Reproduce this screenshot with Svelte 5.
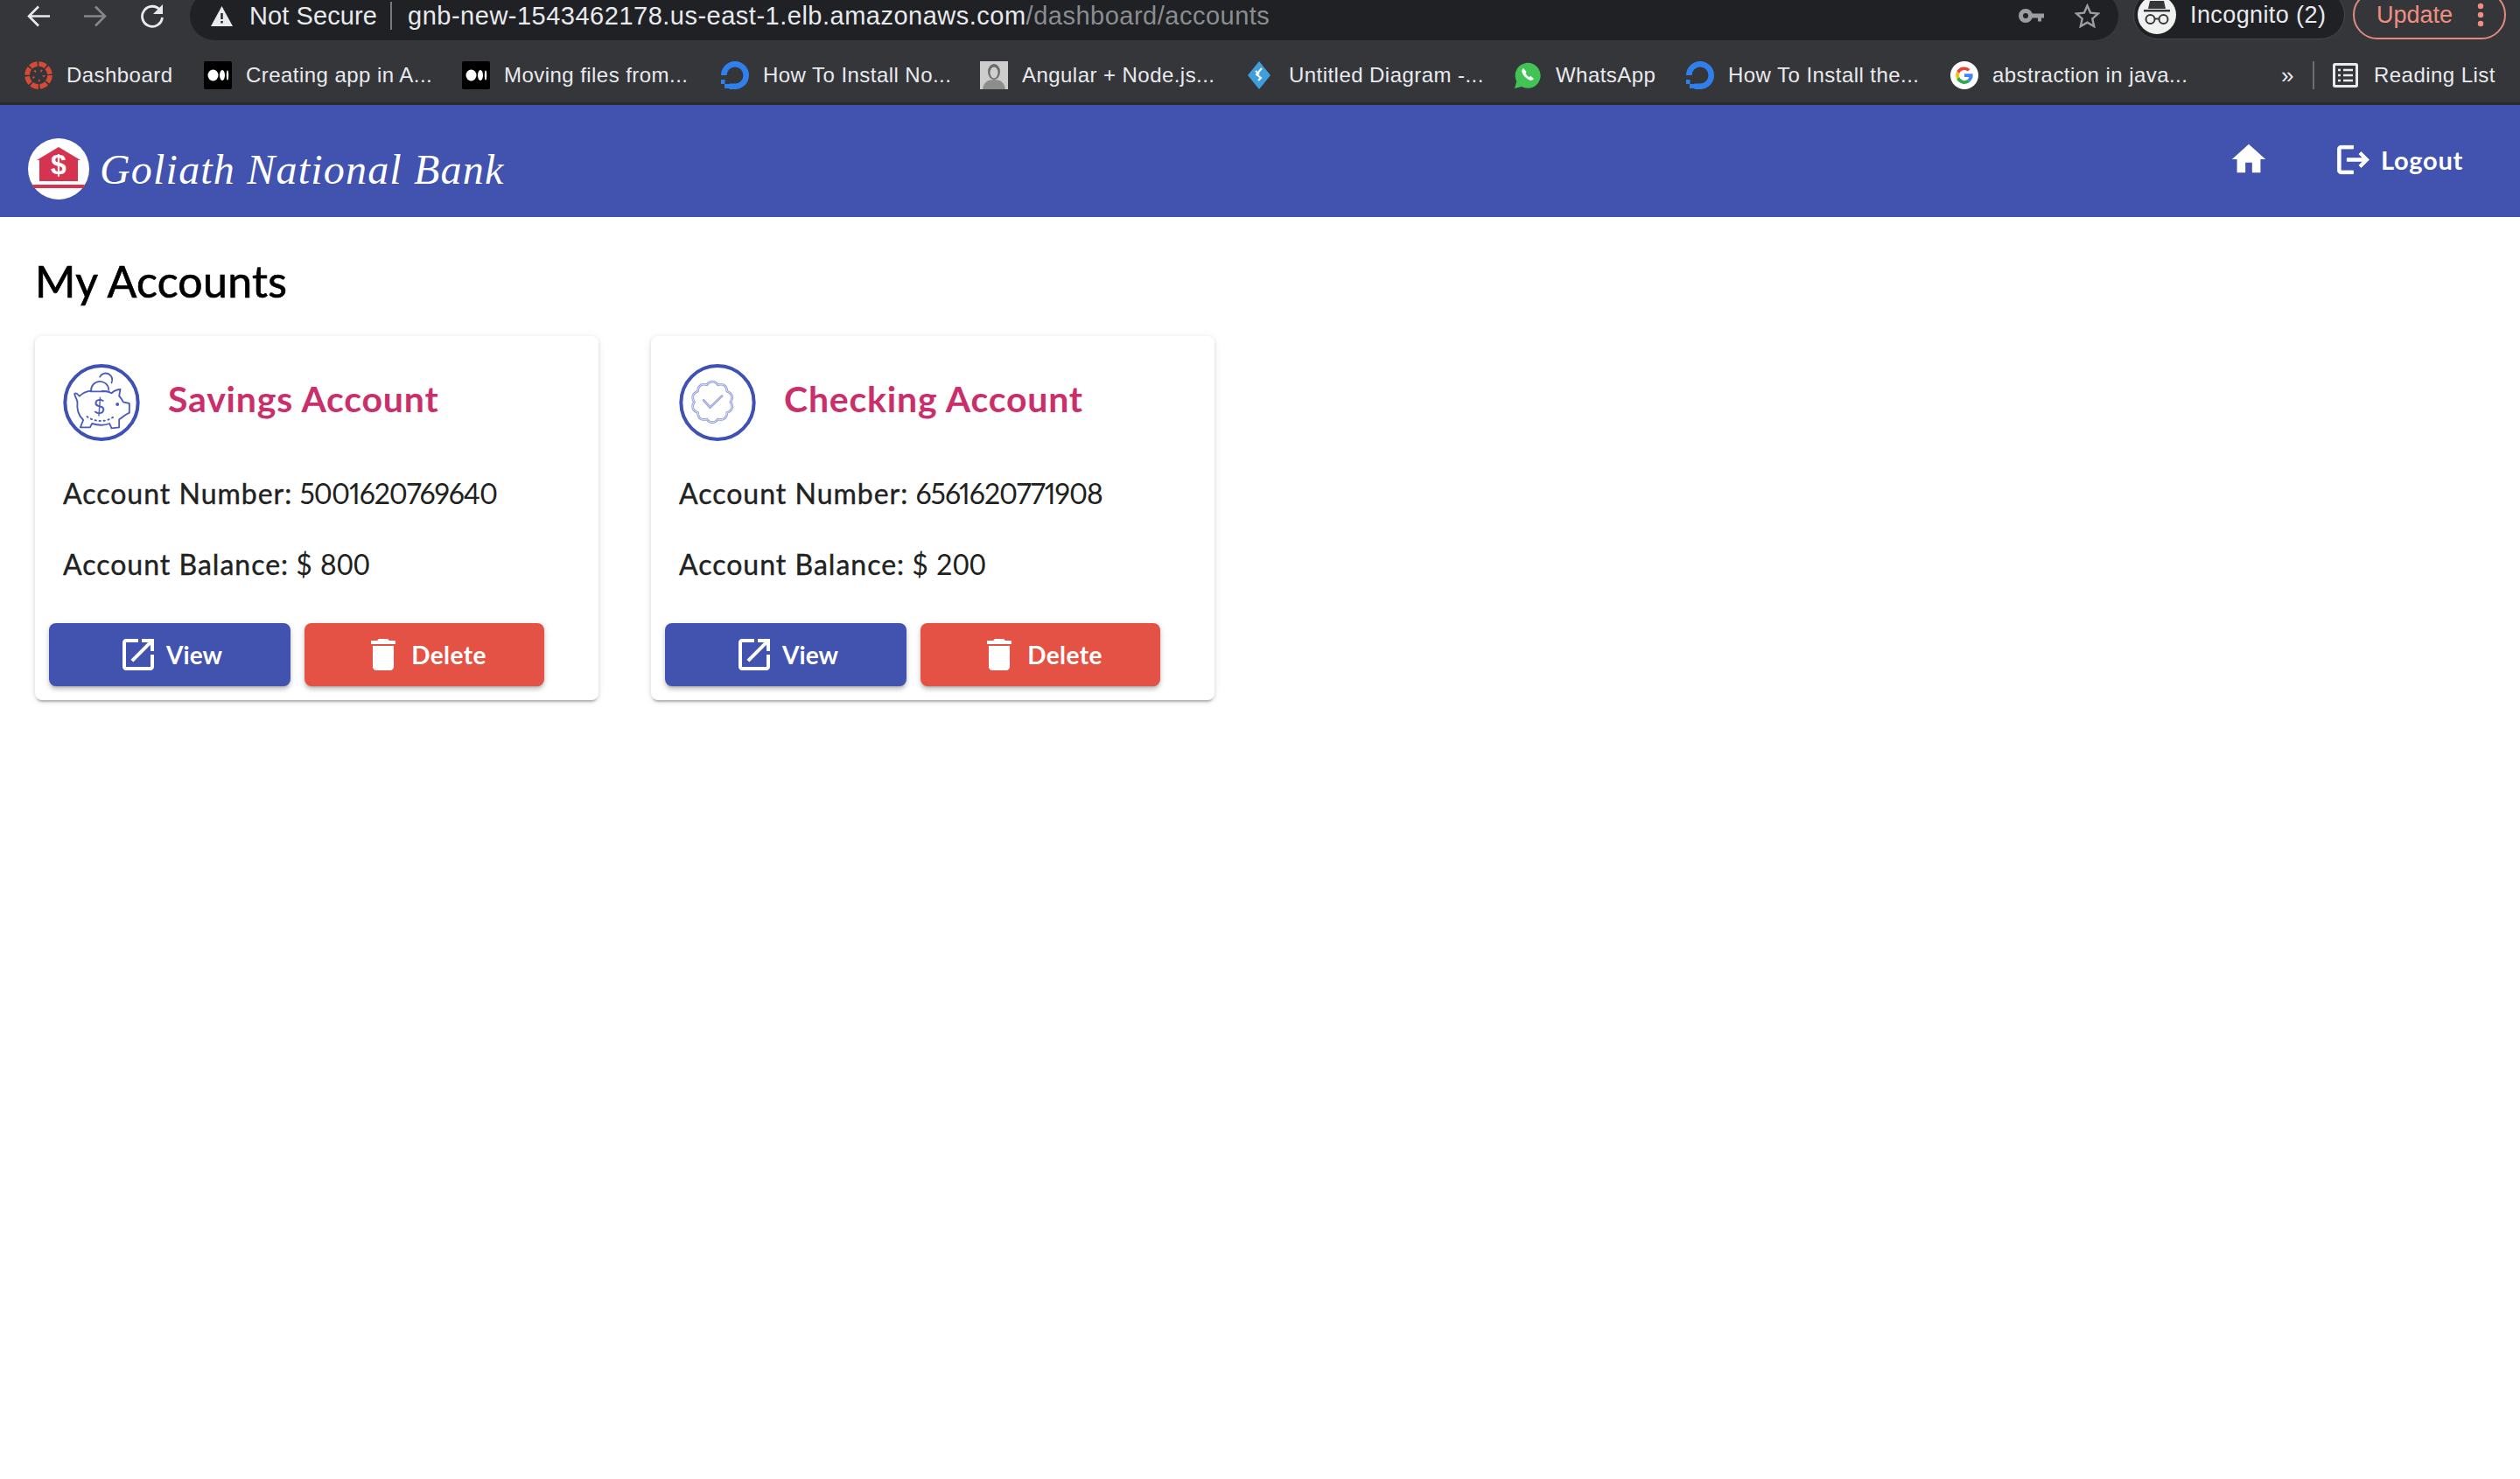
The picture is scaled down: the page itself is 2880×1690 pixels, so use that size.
<script>
  const bookmarks = [
    { icon: 'canvas', label: 'Dashboard', width: 205 },
    { icon: 'medium', label: 'Creating app in A...', width: 295 },
    { icon: 'medium', label: 'Moving files from...', width: 296 },
    { icon: 'do', label: 'How To Install No...', width: 296 },
    { icon: 'photo', label: 'Angular + Node.js...', width: 305 },
    { icon: 'diagram', label: 'Untitled Diagram -...', width: 305 },
    { icon: 'whatsapp', label: 'WhatsApp', width: 197 },
    { icon: 'do', label: 'How To Install the...', width: 302 },
    { icon: 'google', label: 'abstraction in java...', width: 378 }
  ];
  const accounts = [
    { type: 'savings', title: 'Savings Account', number: '5001620769640', balance: '800' },
    { type: 'checking', title: 'Checking Account', number: '6561620771908', balance: '200' }
  ];
  function scallop(cx, cy, r, amp, n) {
    let d = '';
    for (let i = 0; i <= 180; i++) {
      const a = (i / 180) * Math.PI * 2;
      const rr = r + amp * Math.abs(Math.sin((a * n) / 2));
      d += (i ? 'L' : 'M') + (cx + rr * Math.cos(a)).toFixed(1) + ' ' + (cy + rr * Math.sin(a)).toFixed(1);
    }
    return d + 'Z';
  }
  const badge = scallop(180, 178, 62, 8, 10);
</script>

<div class="page">
  <div class="toolbar">
    <div class="tb-btn back">
      <svg width="27" height="25" viewBox="0 0 27 25"><path d="M26 12.5H3M13 1.5 2 12.5l11 11" fill="none" stroke="#e8eaed" stroke-width="2.6"/></svg>
    </div>
    <div class="tb-btn forward">
      <svg width="27" height="25" viewBox="0 0 27 25"><path d="M1 12.5h23M14 1.5l11 11-11 11" fill="none" stroke="#85878b" stroke-width="2.6"/></svg>
    </div>
    <div class="tb-btn reload">
      <svg width="30" height="30" viewBox="0 0 30 30"><path d="M24 8.5A11.5 11.5 0 1 0 26.5 17" fill="none" stroke="#e8eaed" stroke-width="2.8"/><path d="M27 2v11H16z" fill="#e8eaed"/></svg>
    </div>
    <div class="omnibox">
      <svg class="warn" width="25" height="23" viewBox="0 0 25 23"><path d="M12.5 0 25 23H0z" fill="#e8eaed"/><path d="M11.3 8h2.4v7h-2.4zM11.3 17h2.4v2.6h-2.4z" fill="#202124"/></svg>
      <span class="secure">Not Secure</span>
      <span class="omni-sep"></span>
      <span class="url">gnb-new-1543462178.us-east-1.elb.amazonaws.com<span class="path">/dashboard/accounts</span></span>
      <svg class="key" width="29" height="16" viewBox="0 0 29 16"><circle cx="8" cy="8" r="5.5" fill="none" stroke="#9b9da1" stroke-width="5"/><path d="M13 5.5h16v5h-3v4h-4v-4h-9z" fill="#9b9da1"/></svg>
      <svg class="star" width="29" height="28" viewBox="0 0 29 28"><path d="m14.5 2.5 3.6 8.1 8.9.9-6.7 5.9 1.9 8.7-7.7-4.5-7.7 4.5 1.9-8.7L2 11.500l8.900-.9z" fill="none" stroke="#9b9da1" stroke-width="2.4"/></svg>
    </div>
    <div class="incognito">
      <span class="inc-circle">
        <svg width="44" height="44" viewBox="0 0 44 44"><path d="M14 6h16l2 9H12zM7 16h30v2.500H7z" fill="#35363a"/><circle cx="14.500" cy="27" r="5" fill="none" stroke="#35363a" stroke-width="2"/><circle cx="29.500" cy="27" r="5" fill="none" stroke="#35363a" stroke-width="2"/><path d="M19.500 26.500h5" stroke="#35363a" stroke-width="2"/></svg>
      </span>
      <span>Incognito (2)</span>
    </div>
    <div class="update">
      <span>Update</span>
      <svg width="8" height="28" viewBox="0 0 8 28"><circle cx="4" cy="4" r="3.200" fill="#ee8f82"/><circle cx="4" cy="14" r="3.200" fill="#ee8f82"/><circle cx="4" cy="24" r="3.200" fill="#ee8f82"/></svg>
    </div>
  </div>

  <div class="bookmarks">
    {#each bookmarks as b}
      <div class="bm" style="width:{b.width}px">
        <svg class="fav" width="32" height="32" viewBox="0 0 32 32">
          {#if b.icon === 'canvas'}
            <circle cx="16" cy="16" r="13" fill="none" stroke="#d64a37" stroke-width="5.500" stroke-dasharray="8.500 1.700"/>
            <circle cx="16" cy="16" r="6" fill="none" stroke="#d64a37" stroke-width="2.500" stroke-dasharray="1.800 5.700"/>
          {:else if b.icon === 'medium'}
            <rect width="32" height="32" rx="2" fill="#000"/>
            <ellipse cx="10.500" cy="16" rx="6" ry="6.500" fill="#fff"/>
            <ellipse cx="21" cy="16" rx="3" ry="6" fill="#fff"/>
            <ellipse cx="27" cy="16" rx="1.200" ry="5.500" fill="#fff"/>
          {:else if b.icon === 'do'}
            <path d="M16 32v-6.500A9.500 9.500 0 1 0 6.500 16H0A16 16 0 1 1 16 32z" fill="#2f80ed"/>
            <path d="M9.500 25.500H16V32H9.500zM4 26h5.500v5H4zM0 21h4.500v5H0z" fill="#2f80ed"/>
          {:else if b.icon === 'photo'}
            <rect width="32" height="32" fill="#b9b9b9"/>
            <rect width="32" height="32" fill="#e2e2e2" opacity=".5"/>
            <ellipse cx="16" cy="12" rx="7" ry="9" fill="#6b6b6b"/>
            <ellipse cx="16" cy="13" rx="4.500" ry="6.500" fill="#cfcfcf"/>
            <path d="M3 32c1-8 6-11 13-11s12 3 13 11z" fill="#8d8d8d"/>
          {:else if b.icon === 'diagram'}
            <path d="M14 0 27 16 14 32 1 16z" fill="#3f9fdc" transform="translate(0)"/>
            <path d="m17 8-6 7 5 4-3 3M10 11l4 4" fill="none" stroke="#fff" stroke-width="2"/>
          {:else if b.icon === 'whatsapp'}
            <path d="M1 31l2.200-8A14.500 14.500 0 1 1 9 29z" fill="#43c355"/>
            <path d="M11 8c-3 2-2 6 2 10s8 5 10 2l-3.500-3-2 1c-2-1-3-2.500-4-4l1-2z" fill="#fff"/>
          {:else if b.icon === 'google'}
            <circle cx="16" cy="16" r="16" fill="#fff"/>
            <path d="M16 6.500a9.500 9.500 0 0 1 6.500 2.500l-2.600 2.600A6 6 0 0 0 10.300 14l-3-2.400A9.500 9.500 0 0 1 16 6.500z" fill="#ea4335"/>
            <path d="M7.300 11.600l3 2.400a6 6 0 0 0 0 4l-3 2.400a9.500 9.500 0 0 1 0-8.800z" fill="#fbbc05"/>
            <path d="M7.300 20.400l3-2.400a6 6 0 0 0 9 3.100l3 2.300A9.500 9.500 0 0 1 7.300 20.400z" fill="#34a853"/>
            <path d="M25.500 14.200H16V18h5.400a5 5 0 0 1-2.100 3.100l3 2.300c3-2.700 3.800-6 3.200-9.200z" fill="#4285f4"/>
          {/if}
        </svg>
        <span>{b.label}</span>
      </div>
    {/each}
    <span class="more">»</span>
    <span class="bm-sep"></span>
    <div class="reading">
      <svg width="29" height="28" viewBox="0 0 29 28"><rect x="1.500" y="1.500" width="26" height="25" rx="1" fill="none" stroke="#e8eaed" stroke-width="3"/><path d="M6 8h3M12 8h11M6 14h3M12 14h11M6 20h3M12 20h11" stroke="#e8eaed" stroke-width="2.400"/></svg>
      <span>Reading List</span>
    </div>
  </div>

  <header class="nav">
    <div class="brand">
      <svg width="70" height="70" viewBox="0 0 70 70">
        <circle cx="35" cy="35" r="35" fill="#fff"/>
        <path d="M35 10 60 25h-3v24H13V25h-3z" fill="#d5334f"/>
        <path d="M5 53h60l-1.500 4H6.500z" fill="#d5334f"/>
        <text x="35" y="41" text-anchor="middle" class="logo-dollar">$</text>
      </svg>
      <span class="brand-name">Goliath National Bank</span>
    </div>
    <div class="nav-actions">
      <svg class="home" width="46" height="46" viewBox="0 0 24 24"><path d="M10 20v-6h4v6h5v-8h3L12 3 2 12h3v8z" fill="#fff"/></svg>
      <div class="logout">
        <svg width="43" height="43" viewBox="0 0 24 24"><path d="M17 7l-1.410 1.410L18.170 11H8v2h10.170l-2.580 2.580L17 17l5-5zM4 5h8V3H4c-1.100 0-2 .9-2 2v14c0 1.100.9 2 2 2h8v-2H4V5z" fill="#fff" stroke="#fff" stroke-width=".5"/></svg>
        <span>Logout</span>
      </div>
    </div>
  </header>

  <main class="content">
    <h1>My Accounts</h1>
    <div class="cards">
      {#each accounts as a}
        <section class="card">
          <div class="card-head">
            <svg class="avatar" width="88" height="88" viewBox="67 48 261 264">
              <ellipse cx="197.500" cy="180" rx="125" ry="126" fill="none" stroke="#3f51b5" stroke-width="12"/>
              {#if a.type === 'savings'}
                <g fill="none" stroke="#4a5cbc" stroke-width="5.500" stroke-linejoin="round" stroke-linecap="round">
                  <path d="M160 140C145 142 130 150 122 158 115 150 110 145 105 150 108 165 115 170 115 180 112 200 118 225 135 240L125 265H158L165 252C185 258 210 258 225 252L232 268 258 265V238C268 232 275 225 280 222L293 215V183L272 178C268 170 262 162 258 157L262 135C250 135 238 142 232 148 222 142 210 140 200 140"/>
                  <path d="M162 140A30 30 0 0 1 222 135M160 142H224"/>
                  <path d="M192 92A21 21 0 0 1 232 112"/>
                  <path d="M148 228C175 248 215 248 240 228" stroke-dasharray="4 11"/>
                </g>
                <circle cx="252" cy="186" r="6" fill="#4a5cbc"/>
                <text x="190" y="218" text-anchor="middle" class="pig-dollar">$</text>
              {:else}
                <path d={badge} fill="none" stroke="#8d99d6" stroke-width="8"/>
                <path d={badge} fill="none" stroke="#fff" stroke-width="2.500"/>
                <path d="M150 172 172 197 213 157" fill="none" stroke="#8d99d6" stroke-width="8" stroke-linecap="round" stroke-linejoin="round"/>
                <path d="M150 172 172 197 213 157" fill="none" stroke="#fff" stroke-width="2" stroke-linecap="round" stroke-linejoin="round"/>
              {/if}
            </svg>
            <h2>{a.title}</h2>
          </div>
          <p class="row"><strong>Account Number:</strong> <span class="num">{a.number}</span></p>
          <p class="row second"><strong>Account Balance:</strong> <span class="bal">$ {a.balance}</span></p>
          <div class="actions">
            <button class="btn view">
              <svg width="48" height="48" viewBox="0 0 24 24"><path d="M19 19H5V5h7V3H5c-1.110 0-2 .9-2 2v14c0 1.100.89 2 2 2h14c1.100 0 2-.9 2-2v-7h-2v7zM14 3v2h3.590l-9.830 9.830 1.410 1.410L19 6.410V10h2V3h-7z" fill="#fff"/></svg>
              <span>View</span>
            </button>
            <button class="btn del">
              <svg width="48" height="48" viewBox="0 0 24 24"><path d="M6 19c0 1.100.9 2 2 2h8c1.100 0 2-.9 2-2V7H6v12zM19 4h-3.500l-1-1h-5l-1 1H5v2h14V4z" fill="#fff"/></svg>
              <span>Delete</span>
            </button>
          </div>
        </section>
      {/each}
    </div>
  </main>
</div>

<style>
  :global(body) {
    margin: 0;
    background: #fff;
  }
  .page {
    width: 2880px;
    height: 1690px;
    overflow: hidden;
    font-family: Lato, "Open Sans", sans-serif;
    background: #fff;
  }
  .toolbar {
    height: 46px;
    overflow: hidden;
    background: #35363a;
    display: flex;
    align-items: flex-end;
    font-family: "Liberation Sans", Arial, sans-serif;
    color: #e8eaed;
  }
  .tb-btn {
    height: 56px;
    flex: none;
    display: flex;
    align-items: center;
  }
  .back { margin-left: 31px; }
  .forward { margin-left: 37px; }
  .reload { margin-left: 37px; }
  .omnibox {
    margin-left: 28px;
    width: 2204px;
    height: 56px;
    flex: none;
    background: #202124;
    border-radius: 28px;
    display: flex;
    align-items: center;
    font-size: 29px;
    box-sizing: border-box;
    padding-left: 24px;
  }
  .secure {
    margin-left: 19px;
    letter-spacing: 0.1px;
  }
  .omni-sep {
    width: 2px;
    height: 32px;
    background: #77797c;
    margin-left: 15px;
  }
  .url {
    margin-left: 18px;
    letter-spacing: 0.5px;
    white-space: nowrap;
  }
  .path { color: #8a8d91; }
  .key { margin-left: auto; }
  .star {
    margin-left: 35px;
    margin-right: 21px;
  }
  .incognito {
    margin-left: 17px;
    margin-bottom: 1px;
    width: 242px;
    height: 56px;
    flex: none;
    box-sizing: border-box;
    background: #202124;
    border: 1px solid #47484c;
    border-radius: 28px;
    display: flex;
    align-items: center;
    gap: 16px;
    padding-left: 4px;
    font-size: 27px;
    letter-spacing: 0.4px;
    white-space: nowrap;
  }
  .inc-circle {
    width: 44px;
    height: 44px;
    border-radius: 50%;
    background: #f1f1f1;
    flex: none;
    display: flex;
  }
  .update {
    margin-left: 9px;
    margin-bottom: 1px;
    width: 175px;
    height: 56px;
    flex: none;
    box-sizing: border-box;
    border: 2px solid #e28a7e;
    border-radius: 28px;
    display: flex;
    align-items: center;
    padding-left: 25px;
    font-size: 27px;
    color: #ee8f82;
    gap: 28px;
  }
  .bookmarks {
    box-sizing: border-box;
    background: #35363a;
    border-bottom: 3px solid #2b2c2f;
    height: 74px;
    padding: 9px 0 0 28px;
    display: flex;
    align-items: center;
    font-family: "Liberation Sans", Arial, sans-serif;
    font-size: 24px;
    letter-spacing: 0.45px;
    color: #e8eaed;
    white-space: nowrap;
  }
  .bm {
    flex: none;
    display: flex;
    align-items: center;
    gap: 16px;
  }
  .fav { flex: none; }
  .more {
    width: 36px;
    flex: none;
    font-size: 26px;
  }
  .bm-sep {
    width: 2px;
    height: 32px;
    background: #6d6e72;
    flex: none;
  }
  .reading {
    margin-left: 21px;
    display: flex;
    align-items: center;
    gap: 18px;
  }
  .nav {
    height: 128px;
    box-sizing: border-box;
    background: #4153af;
    padding: 0 65px 0 32px;
    display: flex;
    justify-content: space-between;
  }
  .brand {
    display: flex;
    align-items: center;
    gap: 12px;
    padding-top: 18px;
    height: 128px;
    box-sizing: border-box;
  }
  .logo-dollar {
    font: 700 32px "Liberation Sans", sans-serif;
    fill: #fff;
  }
  .brand-name {
    font-family: "Liberation Serif", serif;
    font-style: italic;
    font-size: 48px;
    color: #fff;
    letter-spacing: 1.200px;
    white-space: nowrap;
  }
  .nav-actions {
    display: flex;
    align-items: center;
    height: 128px;
    padding-bottom: 4px;
    box-sizing: border-box;
    gap: 75px;
  }
  .logout {
    display: flex;
    align-items: center;
    gap: 10px;
    color: #fff;
    font-size: 29px;
    font-weight: 700;
    letter-spacing: 0.7px;
  }
  .content {
    padding: 45px 40px 0;
  }
  h1 {
    margin: 0 0 35px;
    font-size: 50px;
    line-height: 56px;
    font-weight: 400;
    letter-spacing: 0.3px;
    -webkit-text-stroke: 0.7px #000;
    color: #000;
  }
  .cards {
    display: flex;
    gap: 60px;
  }
  .card {
    width: 644px;
    height: 416px;
    box-sizing: border-box;
    padding-top: 32px;
    background: #fff;
    border-radius: 8px;
    box-shadow: 0 4px 2px -2px rgba(0, 0, 0, 0.2), 0 2px 4px 0 rgba(0, 0, 0, 0.12), 0 1px 10px 0 rgba(0, 0, 0, 0.08);
  }
  .card-head {
    display: flex;
    gap: 32px;
    padding-left: 32px;
    height: 88px;
  }
  .avatar { flex: none; }
  h2 {
    margin: 0;
    font-size: 41px;
    line-height: 80px;
    font-weight: 700;
    letter-spacing: 0.8px;
    color: #c9306b;
    white-space: nowrap;
  }
  .row {
    margin: 36px 0 0 32px;
    font-size: 32px;
    line-height: 48px;
    color: #212121;
    white-space: nowrap;
  }
  .row.second { margin-top: 33px; }
  .row strong {
    font-weight: 400;
    letter-spacing: 1px;
    -webkit-text-stroke: 0.4px #212121;
  }
  .num {
    font-weight: 400;
    font-variant-numeric: proportional-nums;
    letter-spacing: -1px;
  }
  .bal {
    font-weight: 400;
    letter-spacing: 0.5px;
  }
  .actions {
    display: flex;
    gap: 16px;
    margin: 43px 0 0 16px;
  }
  .btn {
    height: 72px;
    border: 0;
    padding: 0;
    border-radius: 8px;
    color: #fff;
    font: 700 28px Lato, sans-serif;
    letter-spacing: 0.4px;
    display: flex;
    align-items: center;
    justify-content: center;
    gap: 8px;
    box-shadow: 0 3px 2px -2px rgba(0, 0, 0, 0.2), 0 4px 4px 0 rgba(0, 0, 0, 0.14), 0 2px 8px 0 rgba(0, 0, 0, 0.12);
  }
  .view {
    width: 276px;
    background: #4153af;
    letter-spacing: 0;
  }
  .del {
    width: 274px;
    background: #e35244;
  }
  .btn svg { flex: none; }
  .pig-dollar {
    font: 400 72px Lato, sans-serif;
    fill: #4a5cbc;
  }
</style>
